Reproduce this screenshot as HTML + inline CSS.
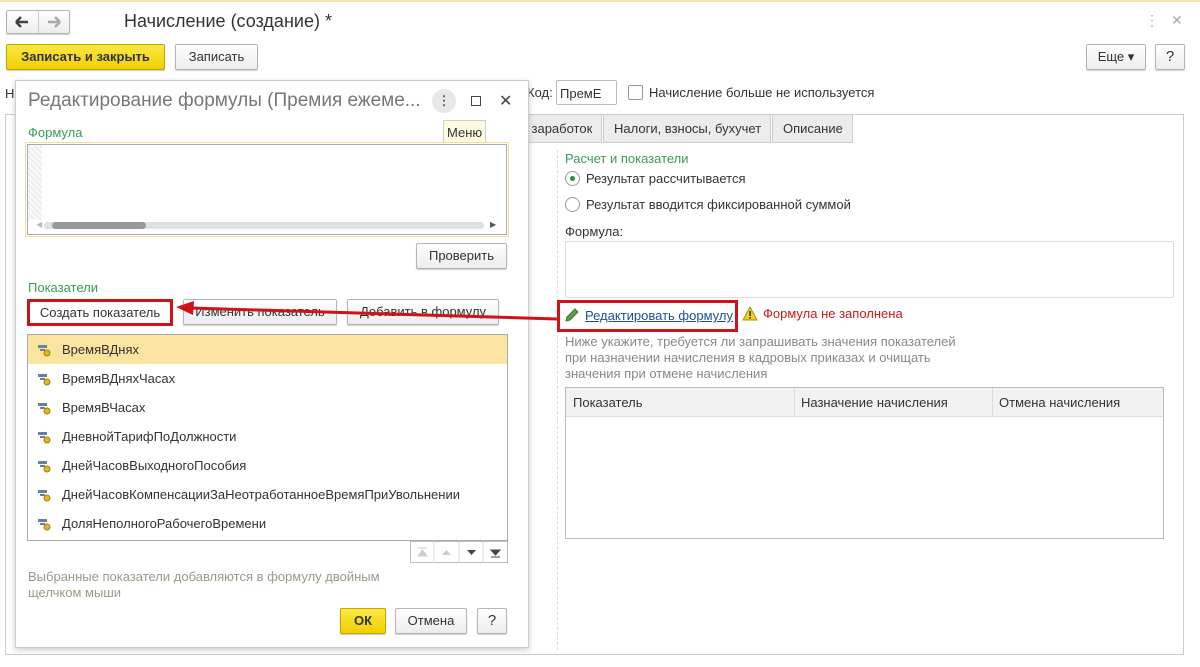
<!DOCTYPE html>
<html><head><meta charset="utf-8"><style>
*{box-sizing:border-box;margin:0;padding:0}
body{width:1200px;height:667px;background:#fff;font-family:"Liberation Sans",sans-serif;font-size:13px;color:#333;position:relative;overflow:hidden}
.a{position:absolute}
.btn{position:absolute;border:1px solid #b5b5b5;border-radius:2px;background:linear-gradient(#fff,#ececec);box-shadow:0 1px 1px rgba(0,0,0,.2);text-align:center;font-size:13px;color:#333}
.y{background:linear-gradient(#fbe845,#f1d000);border-color:#c4a600;font-weight:bold}
.g{color:#3a9a5a}
.row{position:absolute;left:0;right:0;height:29px;line-height:29px;padding-left:34px;color:#333}
</style></head><body>
<div class="a" style="left:0;top:0;width:1200px;height:2px;background:#f0e6a8"></div>
<div class="btn" style="left:6px;top:10px;width:64px;height:24px"></div>
<div class="a" style="left:38px;top:11px;width:1px;height:22px;background:#ccc"></div>
<svg class="a" style="left:6px;top:10px" width="64" height="24"><path d="M10 12h12M10 12l5-5M10 12l5 5" stroke="#444" stroke-width="2.5" fill="none"/><path d="M42 12h12M54 12l-5-5M54 12l-5 5" stroke="#aaa" stroke-width="2.5" fill="none"/></svg>
<div class="a" style="left:124px;top:11px;font-size:18px;color:#333">Начисление (создание) *</div>
<div class="a" style="left:1145px;top:12px;color:#aaa;font-size:14px">⋮</div>
<div class="a" style="left:1171px;top:12px;color:#aaa;font-size:14px">✕</div>
<div class="btn y" style="left:6px;top:44px;width:159px;height:26px;line-height:24px">Записать и закрыть</div>
<div class="btn" style="left:175px;top:44px;width:83px;height:26px;line-height:24px">Записать</div>
<div class="btn" style="left:1086px;top:44px;width:60px;height:26px;line-height:24px">Еще ▾</div>
<div class="btn" style="left:1155px;top:44px;width:30px;height:26px;line-height:24px;font-size:15px">?</div>
<div class="a" style="left:5px;top:86px">Н</div>
<div class="a" style="left:527px;top:85px">Код:</div>
<div class="a" style="left:556px;top:80px;width:61px;height:25px;border:1px solid #bbb;border-radius:2px;padding:5px 3px">ПремЕ</div>
<div class="a" style="left:628px;top:85px;width:15px;height:15px;border:1px solid #999;border-radius:2px"></div>
<div class="a" style="left:649px;top:85px">Начисление больше не используется</div>
<div class="a" style="left:5px;top:114px;width:1179px;height:541px;border:1px solid #ccc"></div>
<div class="a" style="left:520px;top:114px;width:82px;height:29px;background:#ececec;border:1px solid #ccc;padding:6px 0 0 4px">i заработок</div>
<div class="a" style="left:603px;top:114px;width:168px;height:29px;background:#ececec;border:1px solid #ccc;padding:6px 0 0 10px">Налоги, взносы, бухучет</div>
<div class="a" style="left:772px;top:114px;width:81px;height:29px;background:#ececec;border:1px solid #ccc;padding:6px 0 0 10px">Описание</div>
<div class="a" style="left:557px;top:150px;height:500px;border-left:1px dashed #ddd"></div>
<div class="a g" style="left:565px;top:151px">Расчет и показатели</div>
<div class="a" style="left:565px;top:171px;width:15px;height:15px;border:1px solid #999;border-radius:50%"><div class="a" style="left:4px;top:4px;width:5px;height:5px;border-radius:50%;background:#2a8a4a"></div></div>
<div class="a" style="left:586px;top:171px">Результат рассчитывается</div>
<div class="a" style="left:565px;top:197px;width:15px;height:15px;border:1px solid #999;border-radius:50%"></div>
<div class="a" style="left:586px;top:197px">Результат вводится фиксированной суммой</div>
<div class="a" style="left:565px;top:224px">Формула:</div>
<div class="a" style="left:565px;top:241px;width:609px;height:57px;border:1px solid #ddd;border-radius:2px"></div>
<div class="a" style="left:557px;top:300px;width:181px;height:32px;border:3px solid #d0121b"></div>
<svg class="a" style="left:564px;top:307px" width="16" height="16"><path d="M2 14l1-4 8-8 3 3-8 8z" fill="#5aa040" stroke="#3a7a2a"/></svg>
<div class="a" style="left:585px;top:308px;color:#1e4ea0;text-decoration:underline">Редактировать формулу</div>
<svg class="a" style="left:742px;top:306px" width="16" height="15"><path d="M8 1L15 14H1z" fill="#f2d21a" stroke="#b09000"/><rect x="7.3" y="5" width="1.6" height="5" fill="#333"/><rect x="7.3" y="11" width="1.6" height="1.6" fill="#333"/></svg>
<div class="a" style="left:763px;top:306px;color:#c81a1a">Формула не заполнена</div>
<div class="a" style="left:565px;top:334px;color:#888;line-height:16px">Ниже укажите, требуется ли запрашивать значения показателей<br>при назначении начисления в кадровых приказах и очищать<br>значения при отмене начисления</div>
<div class="a" style="left:565px;top:387px;width:599px;height:152px;border:1px solid #bbb"></div>
<div class="a" style="left:566px;top:388px;width:597px;height:29px;background:#f2f2f2;border-bottom:1px solid #ddd"></div>
<div class="a" style="left:794px;top:388px;width:1px;height:29px;background:#ddd"></div>
<div class="a" style="left:992px;top:388px;width:1px;height:29px;background:#ddd"></div>
<div class="a" style="left:573px;top:395px">Показатель</div>
<div class="a" style="left:801px;top:395px">Назначение начисления</div>
<div class="a" style="left:999px;top:395px">Отмена начисления</div>

<div class="a" style="left:15px;top:80px;width:514px;height:568px;background:#fff;border:1px solid #ccc;box-shadow:0 2px 6px rgba(0,0,0,.2)"></div>
<div class="a" style="left:28px;top:90px;font-size:19px;color:#777">Редактирование формулы (Премия ежеме...</div>
<div class="a" style="left:432px;top:89px;width:24px;height:24px;border-radius:50%;background:#e8e8e8;text-align:center;line-height:24px;color:#666;font-weight:bold">⋮</div>
<div class="a" style="left:471px;top:96px;width:10px;height:10px;border:1.5px solid #444"></div>
<div class="a" style="left:499px;top:91px;font-size:16px;color:#444">✕</div>
<div class="a" style="left:443px;top:120px;width:43px;height:23px;background:#fdfbe0;border:1px solid #ccc;padding:4px 3px;font-size:13px">Меню</div>
<div class="a g" style="left:28px;top:125px">Формула</div>
<div class="a" style="left:25px;top:142px;width:484px;height:95px;border:1px solid #f0e090"></div>
<div class="a" style="left:27px;top:144px;width:480px;height:91px;border:1px solid #aaa"></div>
<div class="a" style="left:28px;top:145px;width:14px;height:75px;background:repeating-linear-gradient(45deg,#eee 0 2px,#fafafa 2px 4px)"></div>
<div class="a" style="left:44px;top:222px;width:440px;height:7px;border-radius:4px;background:#e0e0e0"></div>
<div class="a" style="left:52px;top:222px;width:94px;height:7px;border-radius:4px;background:#999"></div>
<div class="a" style="left:36px;top:220px;font-size:8px;color:#bbb">◀</div>
<div class="a" style="left:490px;top:220px;font-size:8px;color:#555">▶</div>
<div class="btn" style="left:416px;top:243px;width:91px;height:26px;line-height:24px">Проверить</div>
<div class="a g" style="left:28px;top:280px">Показатели</div>
<div class="btn" style="left:183px;top:299px;width:154px;height:26px;line-height:24px">Изменить показатель</div>
<div class="btn" style="left:347px;top:299px;width:152px;height:26px;line-height:24px">Добавить в формулу</div>
<div class="a" style="left:27px;top:299px;width:146px;height:27px;border:3px solid #d0121b;background:#fff;text-align:center;line-height:21px">Создать показатель</div>
<div class="a" style="left:27px;top:334px;width:481px;height:207px;border:1px solid #aaa">
<div class="row" style="top:0;background:#fbe3a0">ВремяВДнях</div>
<div class="row" style="top:29px">ВремяВДняхЧасах</div>
<div class="row" style="top:58px">ВремяВЧасах</div>
<div class="row" style="top:87px">ДневнойТарифПоДолжности</div>
<div class="row" style="top:116px">ДнейЧасовВыходногоПособия</div>
<div class="row" style="top:145px">ДнейЧасовКомпенсацииЗаНеотработанноеВремяПриУвольнении</div>
<div class="row" style="top:174px">ДоляНеполногоРабочегоВремени</div>
<svg class="a" style="left:10px;top:9px" width="14" height="200"><g id="i"><rect x="0" y="1" width="9" height="3" fill="#6a7f9a"/><rect x="2" y="5" width="5" height="2" fill="#6a7f9a"/><circle cx="9" cy="9" r="3" fill="#e0b820" stroke="#a08010"/></g><use href="#i" y="29"/><use href="#i" y="58"/><use href="#i" y="87"/><use href="#i" y="116"/><use href="#i" y="145"/><use href="#i" y="174"/></svg>
</div>
<div class="a" style="left:410px;top:541px;width:98px;height:22px;border:1px solid #bbb"></div>
<svg class="a" style="left:410px;top:541px" width="98" height="22"><path d="M24 0v22M49 0v22M73 0v22" stroke="#ddd"/><path d="M8 7h9M8 15l4.5-6 4.5 6z" stroke="#ccc" fill="#ccc"/><path d="M32 14l4.5-5 4.5 5z" fill="#ccc"/><path d="M57 9l4.5 5 4.5-5z" fill="#444"/><path d="M81 9l4.5 5 4.5-5zM81 16h9" stroke="#444" fill="#444"/></svg>
<div class="a" style="left:28px;top:569px;color:#998;line-height:16px">Выбранные показатели добавляются в формулу двойным<br>щелчком мыши</div>
<div class="btn y" style="left:340px;top:608px;width:46px;height:26px;line-height:24px">ОК</div>
<div class="btn" style="left:395px;top:608px;width:72px;height:26px;line-height:24px">Отмена</div>
<div class="btn" style="left:477px;top:608px;width:30px;height:26px;line-height:24px;font-size:15px">?</div>
<svg class="a" style="left:0;top:0" width="1200" height="667"><line x1="557" y1="319" x2="190" y2="308" stroke="#d0121b" stroke-width="3"/><polygon points="176,307 194,301 193,315" fill="#d0121b"/></svg>
</body></html>
